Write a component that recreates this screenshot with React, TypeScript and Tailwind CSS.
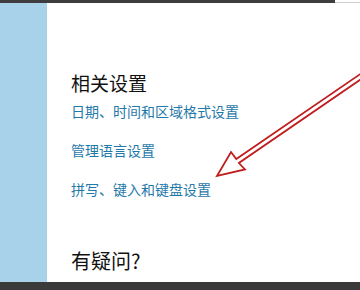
const cjk = { fontFamily: '"Microsoft YaHei", "Noto Sans CJK SC", "Noto Sans", sans-serif' };

function Arrow() {
  return (
    <svg
      className="absolute left-0 top-0 pointer-events-none"
      width={360}
      height={290}
      viewBox="0 0 360 290"
    >
      <polygon
        points="217,176 231,152 236.3,159 397.4,48.6 399.8,52.6 238.9,163 245,169.5"
        fill="none"
        stroke="#c01d1d"
        strokeWidth={1.8}
        strokeLinejoin="miter"
      />
    </svg>
  );
}

export default function App() {
  const links = ['日期、时间和区域格式设置', '管理语言设置', '拼写、键入和键盘设置'];

  return (
    <div className="relative w-[360px] h-[290px] overflow-hidden flex flex-col bg-white" style={cjk}>
      <div className="flex h-[3px] shrink-0">
        <div className="w-[335px] bg-[#3d3d3d]" />
        <div className="flex-1 flex flex-col">
          <div className="h-[2px] bg-white" />
          <div className="h-[1px] bg-[#cfcfcf]" />
        </div>
      </div>

      <div className="flex flex-1 min-h-0">
        <div className="w-[47px] shrink-0 bg-[#a8d1ea]" />
        <div className="flex-1 pl-[24px] flex flex-col">
          <div className="mt-[67px] text-[19px] leading-[26px] text-[#111]">相关设置</div>
          <div className="mt-[5px] flex flex-col gap-[19px]">
            {links.map((l) => (
              <div key={l} className="text-[14px] leading-[20px] text-[#1f79a9]">
                {l}
              </div>
            ))}
          </div>
          <div className="mt-[48px] text-[20px] leading-[28px] text-[#111]">有疑问?</div>
        </div>
      </div>

      <div className="h-[8px] shrink-0 bg-[#3a3a3a]" />
      <Arrow />
    </div>
  );
}
